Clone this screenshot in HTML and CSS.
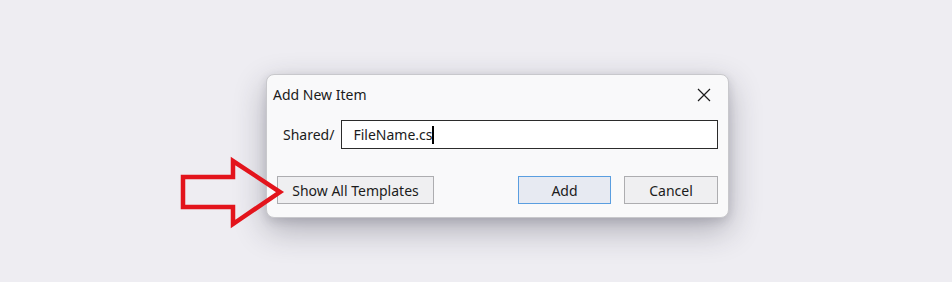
FILE: index.html
```html
<!DOCTYPE html>
<html lang="en-US">
    <head>
        <meta charset="utf-8">
        <title>Add New Item</title>
        <link rel="stylesheet" href="styles.css">
    </head>
    <body>
        <main class="stage">
            <section class="dialog">
                <div class="titlebar">
                    <span class="title">Add New Item</span>
                    <svg class="close" width="14" height="14" viewBox="0 0 14 14">
                        <path d="M1 1 L13 13 M13 1 L1 13" stroke="#1b1b1b" stroke-width="1.2" fill="none"/>
                    </svg>
                </div>

                <div class="fieldRow">
                    <label class="prefix" for="fileName">Shared/</label>
                    <div class="input" id="fileName">
                        <span>FileName.cs</span><span class="caret"></span>
                    </div>
                </div>

                <div class="buttonRow">
                    <button class="btn btnWide">Show All Templates</button>
                    <div class="actions">
                        <button class="btn btnDefault">Add</button>
                        <button class="btn">Cancel</button>
                    </div>
                </div>
            </section>

            <!-- red callout arrow pointing at the templates button -->
            <svg class="arrow" width="110" height="76" viewBox="0 0 110 76">
                <path d="M5 21 L55 21 L55 5 L102 36 L55 68 L55 51 L5 51 Z"
                      stroke="#e3141c" stroke-width="4.5" fill="none" stroke-linejoin="miter"/>
            </svg>
        </main>
    </body>
</html>
```

FILE: styles.css
```css
:root {
    font-family: 'Noto Sans', 'Open Sans', sans-serif;
    color: #1b1b1b;
}

body {
    margin: 0;
    background-color: #eeedf2;
}

.stage {
    position: relative;
    width: 952px;
    height: 282px;
    padding: 74px 0 0 266px;
    box-sizing: border-box;
}

.dialog {
    width: 463px;
    height: 144px;
    box-sizing: border-box;

    background-color: #f9f9fa;
    border: 1px solid #c8c8cc;
    border-radius: 8px;
    box-shadow: 0 12px 32px rgba(40, 40, 60, 0.32), 0 3px 10px rgba(40, 40, 60, 0.14);
}

.titlebar {
    display: flex;
    justify-content: space-between;
    align-items: center;

    height: 39px;
    padding: 0 17px 0 6px;
}

.title {
    font-size: 14px;
}

.close {
    display: block;
}

.fieldRow {
    display: flex;
    align-items: center;
    gap: 7px;

    margin-top: 6px;
    padding: 0 10px 0 16px;
}

.prefix {
    font-size: 14px;
}

.input {
    display: flex;
    align-items: center;
    flex: 1;

    height: 29px;
    box-sizing: border-box;
    padding-left: 11px;

    background-color: #ffffff;
    border: 1px solid #2b2b2b;
    font-size: 14px;
}

.caret {
    display: inline-block;
    width: 2px;
    height: 18px;
    background-color: #000000;
}

.buttonRow {
    display: flex;
    justify-content: space-between;

    margin-top: 27px;
    padding: 0 10px;
}

.actions {
    display: flex;
    gap: 13px;
}

.btn {
    width: 94px;
    height: 28px;

    background-color: #efeff1;
    border: 1px solid #adadb0;
    border-radius: 0;

    font-family: inherit;
    font-size: 14px;
    color: #1b1b1b;
}

.btnWide {
    width: 157px;
}

.btnDefault {
    width: 93px;
    background-color: #e7eaf2;
    border-color: #5a9ee0;
}

.arrow {
    position: absolute;
    left: 178px;
    top: 156px;
}
```
